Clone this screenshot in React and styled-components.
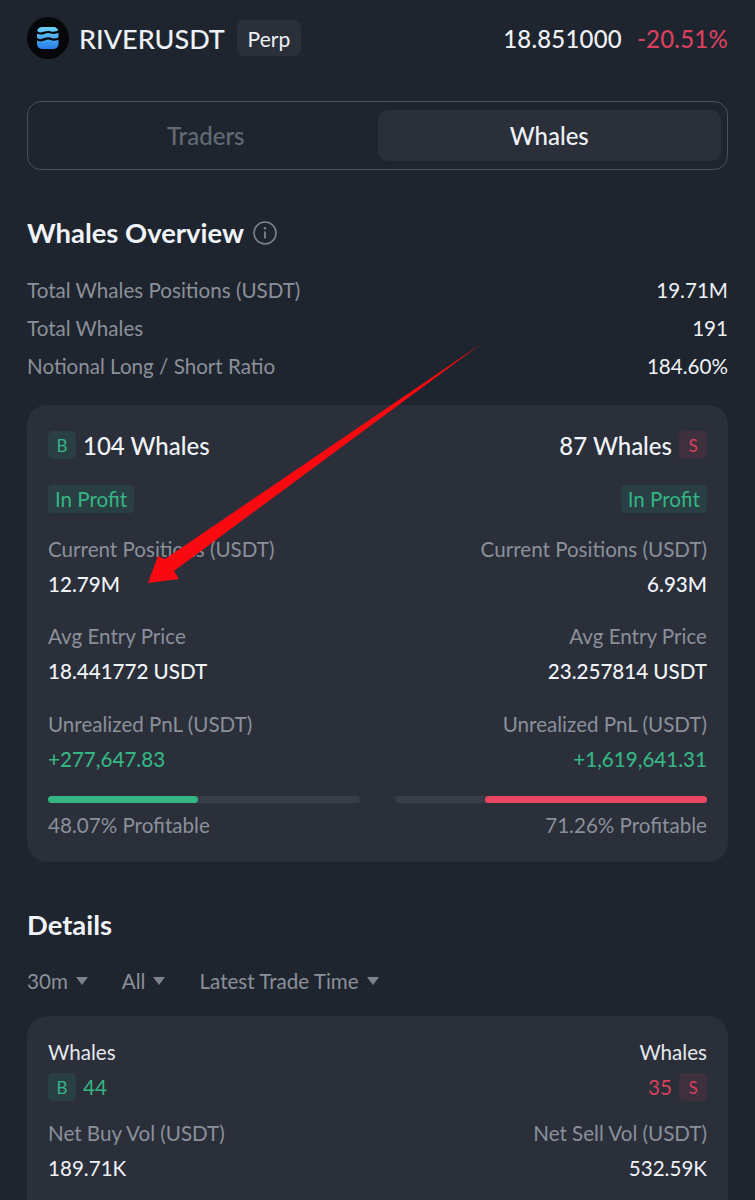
import React from "react";
import styled, { createGlobalStyle } from "styled-components";

const GlobalStyle = createGlobalStyle`
  html, body {
    margin: 0;
    padding: 0;
    background: #1f252e;
  }
  * {
    box-sizing: border-box;
  }
`;

const Page = styled.div`
  position: relative;
  width: 755px;
  height: 1200px;
  overflow: hidden;
  padding: 0 27px;
  background: #1f252e;
  color: #eef1f5;
  font-family: "Lato", "Liberation Sans", sans-serif;
`;

const Header = styled.div`
  display: flex;
  align-items: center;
  justify-content: space-between;
  height: 76px;
`;

const Pair = styled.div`
  display: flex;
  align-items: center;
`;

const Logo = styled.svg`
  width: 42px;
  height: 42px;
  margin-right: 10px;
`;

const Symbol = styled.span`
  font-size: 27px;
  font-weight: 500;
  margin-right: 12px;
`;

const Perp = styled.span`
  display: flex;
  align-items: center;
  justify-content: center;
  width: 64px;
  height: 36px;
  border-radius: 7px;
  background: #2a2f3a;
  font-size: 21px;
`;

const Quote = styled.div`
  display: flex;
  gap: 15px;
  font-size: 24px;
  letter-spacing: 0.2px;
  font-weight: 500;
`;

const Change = styled.span`
  color: #d9405f;
`;

const Tabs = styled.div`
  display: grid;
  grid-template-columns: 1fr 1fr;
  height: 69px;
  margin-top: 25px;
  padding: 8px 6px;
  border: 1.5px solid #4a4f58;
  border-radius: 14px;
`;

const Tab = styled.div`
  display: flex;
  align-items: center;
  justify-content: center;
  border-radius: 10px;
  font-size: 24px;
  font-weight: 500;
  color: ${(p) => (p.$active ? "#eef1f5" : "#646a74")};
  background: ${(p) => (p.$active ? "#2a2f3a" : "transparent")};
`;

const SectionTitle = styled.h2`
  display: flex;
  align-items: center;
  gap: 9px;
  margin: 0;
  font-size: 27.4px;
  line-height: 34px;
  font-weight: 700;
  color: #f0f3f7;
`;

const OverviewTitle = styled(SectionTitle)`
  margin-top: 46px;
`;

const InfoIcon = styled.svg`
  width: 24px;
  height: 24px;
`;

const Stats = styled.div`
  display: flex;
  flex-direction: column;
  gap: 8px;
  margin-top: 25px;
`;

const StatRow = styled.div`
  display: flex;
  justify-content: space-between;
  font-size: 20.6px;
  line-height: 30px;
  color: #8b909a;
`;

const StatValue = styled.span`
  color: #eef1f5;
`;

const Card = styled.div`
  margin-top: 24px;
  padding: 26px 21px 0;
  border-radius: 20px;
  background: #2a2f3a;
`;

const OverviewCard = styled(Card)`
  height: 457px;
`;

const DetailCard = styled(Card)`
  margin-top: 22px;
  height: 260px;
  padding-top: 22px;
`;

const Columns = styled.div`
  display: grid;
  grid-template-columns: 1fr 1fr;
  column-gap: 35px;
`;

const Column = styled.div`
  display: flex;
  flex-direction: column;
  align-items: ${(p) => (p.$right ? "flex-end" : "flex-start")};
  text-align: ${(p) => (p.$right ? "right" : "left")};
`;

const SideRow = styled.div`
  display: flex;
  align-items: center;
  gap: 7px;
  height: 28px;
  font-size: 24px;
  font-weight: 500;
  color: #f0f3f7;
`;

const SideBadge = styled.span`
  display: flex;
  align-items: center;
  justify-content: center;
  width: 28px;
  height: 28px;
  border-radius: 5px;
  font-size: 17px;
  font-weight: 400;
  color: ${(p) => (p.$sell ? "#d9405f" : "#35b583")};
  background: ${(p) => (p.$sell ? "#3f303e" : "#2a3f43")};
`;

const ProfitTag = styled.span`
  display: flex;
  align-items: center;
  height: 28px;
  margin-top: 26px;
  padding: 0 7px;
  border-radius: 4px;
  font-size: 20.6px;
  color: #35b583;
  background: #2a3f43;
`;

const Label = styled.div`
  margin-top: ${(p) => p.$top}px;
  font-size: 20.6px;
  line-height: 26px;
  color: #8b909a;
`;

const Value = styled.div`
  margin-top: 9px;
  font-size: 20.6px;
  line-height: 26px;
  font-weight: 500;
  color: ${(p) => (p.$up ? "#35b583" : "#f0f3f7")};
`;

const BarTrack = styled.div`
  display: flex;
  justify-content: ${(p) => (p.$right ? "flex-end" : "flex-start")};
  width: 100%;
  height: 7px;
  margin-top: 24px;
  border-radius: 4px;
  background: #383d48;
`;

const BarFill = styled.div`
  height: 100%;
  border-radius: 4px;
  background: ${(p) => (p.$sell ? "#ea4660" : "#35b583")};
`;

const BarCaption = styled(Label)`
  margin-top: 9px;
`;

const DetailsTitle = styled(SectionTitle)`
  margin-top: 46px;
`;

const Filters = styled.div`
  display: flex;
  gap: 34px;
  margin-top: 26px;
  font-size: 20.6px;
  line-height: 26px;
  color: #8b909a;
`;

const Filter = styled.div`
  display: flex;
  align-items: center;
  gap: 8px;
`;

const Caret = styled.i`
  width: 0;
  height: 0;
  border-left: 6.5px solid transparent;
  border-right: 6.5px solid transparent;
  border-top: 8px solid #7d828c;
`;

const WhaleLabel = styled.div`
  font-size: 20.6px;
  line-height: 28px;
  color: #e6e9ee;
`;

const WhaleCount = styled.div`
  display: flex;
  align-items: center;
  gap: 7px;
  margin-top: 7px;
  font-size: 20.6px;
  color: ${(p) => (p.$sell ? "#d9405f" : "#35b583")};
`;

const PlainValue = styled(Value)`
  font-weight: 400;
`;

const ArrowLayer = styled.svg`
  position: absolute;
  left: 0;
  top: 0;
  width: 755px;
  height: 1200px;
  pointer-events: none;
`;

const sides = [
  {
    count: "104 Whales",
    pos: "12.79M",
    entry: "18.441772 USDT",
    pnl: "+277,647.83",
    pct: 48.07,
  },
  {
    count: "87 Whales",
    pos: "6.93M",
    entry: "23.257814 USDT",
    pnl: "+1,619,641.31",
    pct: 71.26,
    sell: true,
  },
];

const stats = [
  ["Total Whales Positions (USDT)", "19.71M"],
  ["Total Whales", "191"],
  ["Notional Long / Short Ratio", "184.60%"],
];

const SideColumn = ({ side }) => (
  <Column $right={side.sell}>
    <SideRow>
      {!side.sell && <SideBadge>B</SideBadge>}
      {side.count}
      {side.sell && <SideBadge $sell>S</SideBadge>}
    </SideRow>
    <ProfitTag>In Profit</ProfitTag>
    <Label $top={23}>Current Positions (USDT)</Label>
    <Value>{side.pos}</Value>
    <Label $top={26}>Avg Entry Price</Label>
    <Value>{side.entry}</Value>
    <Label $top={27}>Unrealized PnL (USDT)</Label>
    <Value $up>{side.pnl}</Value>
    <BarTrack $right={side.sell}>
      <BarFill $sell={side.sell} style={{ width: `${side.pct}%` }} />
    </BarTrack>
    <BarCaption>{side.pct}% Profitable</BarCaption>
  </Column>
);

const App = () => (
  <Page>
    <GlobalStyle />
    <Header>
      <Pair>
        <Logo viewBox="0 0 42 42" fill="none">
          <defs>
            <linearGradient id="riverBlue" x1="0" y1="0" x2="0" y2="1">
              <stop offset="0" stopColor="#6fd3f2" />
              <stop offset="0.55" stopColor="#45a5ee" />
              <stop offset="1" stopColor="#2a7de8" />
            </linearGradient>
          </defs>
          <circle cx="21" cy="21" r="21" fill="#05070b" />
          <rect x="10" y="10" width="21.500" height="22" rx="5" fill="url(#riverBlue)" />
          <path d="M9 14.500C14 20 18 13 24 15.500C27 16.500 29 16 33 14" stroke="#05070b" strokeWidth="2.200" />
          <path d="M9 21.500C14 27 19 19 24 22C27 23.500 29 23 33 21" stroke="#05070b" strokeWidth="2.200" />
        </Logo>
        <Symbol>RIVERUSDT</Symbol>
        <Perp>Perp</Perp>
      </Pair>
      <Quote>
        <span>18.851000</span>
        <Change>-20.51%</Change>
      </Quote>
    </Header>

    <Tabs>
      <Tab>Traders</Tab>
      <Tab $active>Whales</Tab>
    </Tabs>

    <OverviewTitle>
      Whales Overview
      <InfoIcon viewBox="0 0 24 24" fill="none">
        <circle cx="12" cy="12" r="11" stroke="#7d828c" strokeWidth="1.6" />
        <path d="M12 10.500v7" stroke="#7d828c" strokeWidth="1.8" />
        <circle cx="12" cy="7.300" r="1.200" fill="#7d828c" />
      </InfoIcon>
    </OverviewTitle>

    <Stats>
      {stats.map(([name, value]) => (
        <StatRow key={name}>
          {name}
          <StatValue>{value}</StatValue>
        </StatRow>
      ))}
    </Stats>

    <OverviewCard>
      <Columns>
        {sides.map((side) => (
          <SideColumn key={side.count} side={side} />
        ))}
      </Columns>
    </OverviewCard>

    <DetailsTitle>Details</DetailsTitle>
    <Filters>
      <Filter>
        30m <Caret />
      </Filter>
      <Filter>
        All <Caret />
      </Filter>
      <Filter>
        Latest Trade Time <Caret />
      </Filter>
    </Filters>

    <DetailCard>
      <Columns>
        <Column>
          <WhaleLabel>Whales</WhaleLabel>
          <WhaleCount>
            <SideBadge>B</SideBadge>44
          </WhaleCount>
          <Label $top={19}>Net Buy Vol (USDT)</Label>
          <PlainValue>189.71K</PlainValue>
        </Column>
        <Column $right>
          <WhaleLabel>Whales</WhaleLabel>
          <WhaleCount $sell>
            35<SideBadge $sell>S</SideBadge>
          </WhaleCount>
          <Label $top={19}>Net Sell Vol (USDT)</Label>
          <PlainValue>532.59K</PlainValue>
        </Column>
      </Columns>
    </DetailCard>

    <ArrowLayer viewBox="0 0 755 1200">
      <polygon points="481,344 165,559 158,556 148,583 179,579 174,571" fill="#fa0a10" />
    </ArrowLayer>
  </Page>
);

export default App;
